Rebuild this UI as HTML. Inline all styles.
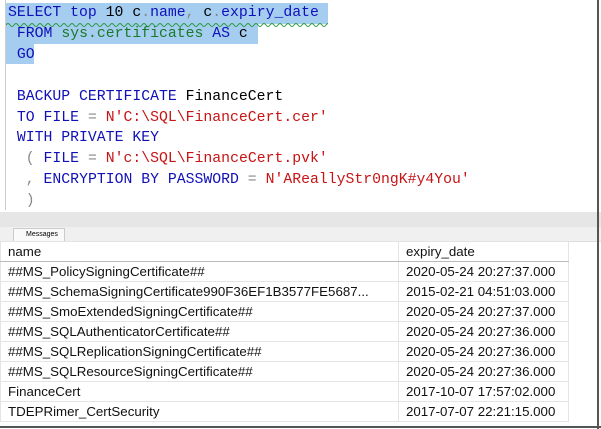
<!DOCTYPE html>
<html><head><style>
body{margin:0;width:601px;height:429px;overflow:hidden;background:#fff;position:relative;font-family:"Liberation Sans",sans-serif}
.code{position:absolute;left:8px;top:3px;font-family:"Liberation Mono",monospace;font-size:14.8px;line-height:20.9px;white-space:pre;color:#000}
.sel{position:absolute;background:#a4cdf0}
.k{color:#1010b8}.g{color:#1a7a2a}.r{color:#c81414}.gr{color:#888}
.gutter{position:absolute;left:0;top:0;width:5px;height:210px;border-right:1px solid #ccc}
.sb{position:absolute;left:0;top:212px;width:601px;height:15px;background:#e6e6e6}
.tabs{position:absolute;left:0;top:227px;width:601px;height:14px;background:#f0f0f0;border-bottom:1px solid #ddd}
.tab{position:absolute;left:13px;top:228px;width:38px;height:12px;background:#fafafa;border:1px solid #ccc;font-size:7px;line-height:12px;padding-left:12px}
table{position:absolute;left:0;top:241px;border-collapse:collapse;font-size:13.3px}
td{height:19px;padding:0 0 0 7px;border:1px solid #e4e4e4;white-space:nowrap;color:#111}
tr:first-child td{border-bottom:1px solid #bbb}
.edge{position:absolute;right:2px;top:0;width:2px;height:429px;background:#555}
.bedge{position:absolute;left:0;bottom:1px;width:601px;height:2px;background:#555}
</style></head><body>
<div class="sel" style="left:6px;top:3px;width:322px;height:21px"></div>
<div class="sel" style="left:6px;top:24px;width:252px;height:20px"></div>
<div class="sel" style="left:6px;top:44px;width:28px;height:20px"></div>
<div class="gutter"></div>
<div class="code"><span class="k">SELECT top</span> 10 c<span class="gr">.</span><span class="k">name</span><span class="gr">,</span> c<span class="gr">.</span><span class="k">expiry_date</span>
 <span class="k">FROM</span> <span class="g">sys.certificates</span> <span class="k">AS</span> c
 <span class="k">GO</span>

 <span class="k">BACKUP CERTIFICATE</span> FinanceCert
 <span class="k">TO FILE</span> <span class="gr">=</span> <span class="r">N'C:\SQL\FinanceCert.cer'</span>
 <span class="k">WITH PRIVATE KEY</span>
  <span class="gr">(</span> <span class="k">FILE</span> <span class="gr">=</span> <span class="r">N'c:\SQL\FinanceCert.pvk'</span>
  <span class="gr">,</span> <span class="k">ENCRYPTION BY PASSWORD</span> <span class="gr">=</span> <span class="r">N'AReallyStr0ngK#y4You'</span>
  <span class="gr">)</span></div>
<svg style="position:absolute;left:6px;top:22px" width="322" height="6"><path d="M0 3 q2 -3 4 0 t4 0 t4 0 t4 0 t4 0 t4 0 t4 0 t4 0 t4 0 t4 0 t4 0 t4 0 t4 0 t4 0 t4 0 t4 0 t4 0 t4 0 t4 0 t4 0 t4 0 t4 0 t4 0 t4 0 t4 0 t4 0 t4 0 t4 0 t4 0 t4 0 t4 0 t4 0 t4 0 t4 0 t4 0 t4 0 t4 0 t4 0 t4 0 t4 0 t4 0 t4 0 t4 0 t4 0 t4 0 t4 0 t4 0 t4 0 t4 0 t4 0 t4 0 t4 0 t4 0 t4 0 t4 0 t4 0 t4 0 t4 0 t4 0 t4 0 t4 0 t4 0 t4 0 t4 0 t4 0 t4 0 t4 0 t4 0 t4 0 t4 0 t4 0 t4 0 t4 0 t4 0 t4 0 t4 0 t4 0 t4 0 t4 0 t4 0 t4 0 t4 0 t4 0 t4 0 t4 0 t4 0" stroke="#2a9a40" fill="none" stroke-width="1"/></svg>
<div class="sb"></div>
<div class="tabs"></div>
<div class="tab">Messages</div>
<table>
<tr><td style="width:390px">name</td><td style="width:162px">expiry_date</td></tr>
<tr><td>##MS_PolicySigningCertificate##</td><td>2020-05-24 20:27:37.000</td></tr>
<tr><td>##MS_SchemaSigningCertificate990F36EF1B3577FE5687...</td><td>2015-02-21 04:51:03.000</td></tr>
<tr><td>##MS_SmoExtendedSigningCertificate##</td><td>2020-05-24 20:27:37.000</td></tr>
<tr><td>##MS_SQLAuthenticatorCertificate##</td><td>2020-05-24 20:27:36.000</td></tr>
<tr><td>##MS_SQLReplicationSigningCertificate##</td><td>2020-05-24 20:27:36.000</td></tr>
<tr><td>##MS_SQLResourceSigningCertificate##</td><td>2020-05-24 20:27:36.000</td></tr>
<tr><td>FinanceCert</td><td>2017-10-07 17:57:02.000</td></tr>
<tr><td>TDEPRimer_CertSecurity</td><td>2017-07-07 22:21:15.000</td></tr>
</table>
<div class="edge"></div><div class="bedge"></div>
</body></html>
